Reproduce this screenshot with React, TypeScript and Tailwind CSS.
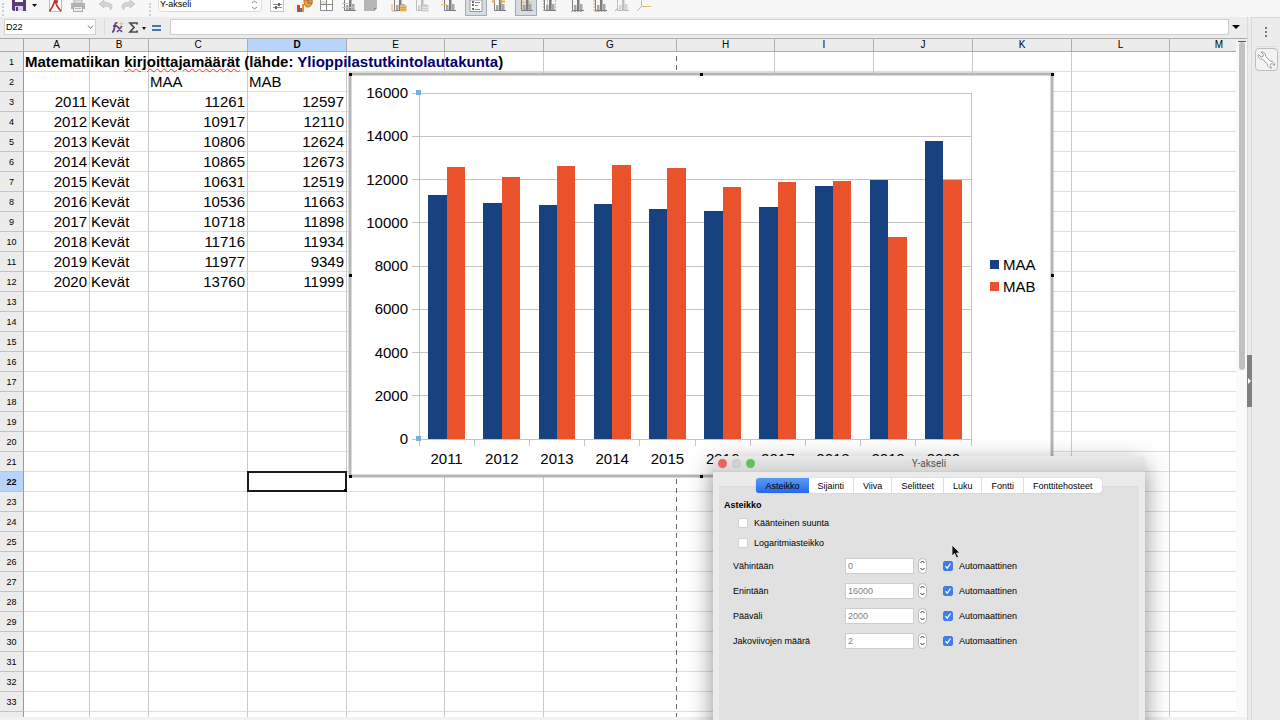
import type { ReactNode } from "react";
import clsx from "clsx";

const COLUMNS = [
  { name: "A", width: 66 },
  { name: "B", width: 59 },
  { name: "C", width: 99 },
  { name: "D", width: 99 },
  { name: "E", width: 98 },
  { name: "F", width: 99 },
  { name: "G", width: 133 },
  { name: "H", width: 98 },
  { name: "I", width: 99 },
  { name: "J", width: 99 },
  { name: "K", width: 99 },
  { name: "L", width: 98 },
  { name: "M", width: 99 },
];

const DATA = [
  { year: 2011, maa: 11261, mab: 12597 },
  { year: 2012, maa: 10917, mab: 12110 },
  { year: 2013, maa: 10806, mab: 12624 },
  { year: 2014, maa: 10865, mab: 12673 },
  { year: 2015, maa: 10631, mab: 12519 },
  { year: 2016, maa: 10536, mab: 11663 },
  { year: 2017, maa: 10718, mab: 11898 },
  { year: 2018, maa: 11716, mab: 11934 },
  { year: 2019, maa: 11977, mab: 9349 },
  { year: 2020, maa: 13760, mab: 11999 },
];

const ROW_COUNT = 33;
const TICKS = [0, 2000, 4000, 6000, 8000, 10000, 12000, 14000, 16000];
const TABS = ["Asteikko", "Sijainti", "Viiva", "Selitteet", "Luku", "Fontti", "Fonttitehosteet"];
const FIELDS = [
  { id: "min", label: "Vähintään", value: "0" },
  { id: "max", label: "Enintään", value: "16000" },
  { id: "major", label: "Pääväli", value: "2000" },
  { id: "minor", label: "Jakoviivojen määrä", value: "2" },
];

/* ---------- toolbar ---------- */

function Tool({
  label,
  active,
  className,
  children,
}: {
  label: string;
  active?: boolean;
  className?: string;
  children: ReactNode;
}) {
  return (
    <button
      type="button"
      aria-label={label}
      className={clsx(
        "flex shrink-0 items-end justify-center",
        active ? "h-4 w-[22px] border border-t-0 border-[#a3a9b1] bg-[#d6dce4] pb-[3px]" : "h-3 w-4",
        className
      )}
    >
      <svg width="16" height="12" viewBox="0 0 16 12" fill="none">
        {children}
      </svg>
    </button>
  );
}

function MiniBars({ muted }: { muted?: boolean }) {
  const c = muted ? "#bdbdbd" : "#7d7d7d";
  return (
    <>
      <path d="M3.500 0v10.500H15" stroke={c} />
      <path d="M5 5h2.500v5H5zM11 4h2.500v6H11z" fill={muted ? "#d2d2d2" : "#a6a6a6"} />
      <path d="M8 0h2.500v10H8z" fill={c} />
    </>
  );
}

function Grip() {
  return <span className="h-3 w-0 shrink-0 border-l-2 border-dotted border-[#cfcfcf]" />;
}

function Toolbar() {
  return (
    <div className="flex h-[17px] shrink-0 items-start overflow-hidden bg-[#f7f7f7]">
      <div className="ml-0.5">
        <Grip />
      </div>
      <Tool label="Tallenna" className="ml-[7px]">
        <path d="M1 0h14v11H2.500L1 9.500z" fill="#5d3a78" />
        <path d="M4 0h8v2H4z" fill="#fff" />
        <path d="M4 6h8v5H4z" fill="#ddd3e6" />
        <path d="M5 7h2v4H5z" fill="#5d3a78" />
      </Tool>
      <Tool label="Tallennusvalinnat" className="ml-px">
        <path d="M4 4h5L6.500 7z" fill="#111" />
      </Tool>
      <Tool label="Vie PDF" className="ml-1">
        <path d="M1.500 0v11.500h12V0" fill="#fff" stroke="#bdbdbd" />
        <path d="M7 0C6 4 4 8 1.500 11.500M7 0c1 5 3 8 6 11M9 0v3" stroke="#c5312f" strokeWidth="1.700" />
      </Tool>
      <Tool label="Tulosta" className="ml-1.5">
        <path d="M1 3h14v6H1z" fill="#b3b3b3" />
        <path d="M4 0h8v3H4z" fill="#e6e6e6" stroke="#b3b3b3" />
        <path d="M3.500 6.500h9v5h-9z" fill="#eee" stroke="#a8a8a8" />
        <path d="M5 8.500h6" stroke="#bbb" />
      </Tool>
      <Tool label="Kumoa" className="ml-3">
        <path d="M1 4l5-4v2.500c5-.5 8 1 8 4.500 0 1.500-1 2.500-2 3 .8-3-1.500-4-6-4V8z" fill="#d4d4d4" stroke="#bbb" strokeWidth=".7" />
      </Tool>
      <Tool label="Tee uudelleen" className="ml-1.5">
        <path d="M15 4l-5-4v2.500c-5-.5-8 1-8 4.500 0 1.500 1 2.500 2 3-.8-3 1.500-4 6-4V8z" fill="#d4d4d4" stroke="#bbb" strokeWidth=".7" />
      </Tool>
      <div className="ml-[13px]">
        <Grip />
      </div>
      <div className="relative ml-[7px] h-3 w-[104px] shrink-0">
        <select
          aria-label="Kaavion osa"
          className="absolute bottom-0 h-4 w-full appearance-none rounded-sm border border-[#dcdcdc] bg-white px-px pb-px text-[9px] leading-3 text-black"
        >
          <option>Y-akseli</option>
        </select>
        <svg className="pointer-events-none absolute right-1 bottom-0.5" width="7" height="10" viewBox="0 0 7 10" fill="none" stroke="#8a8a8a">
          <path d="M1 3l2.500-2L6 3M1 7l2.500 2L6 7" />
        </svg>
      </div>
      <Tool label="Muotoile valinta" className="ml-[7px]">
        <path d="M1.500 0v11.500h13V0" fill="#fff" stroke="#c2c2c2" />
        <path d="M4 4.500h9M4 7.500h9" stroke="#8a8a8a" />
        <path d="M9 3h2v3H9zM6 6h2v3H6z" fill="#666" />
      </Tool>
      <Tool label="Kaavion tyyppi" className="ml-3">
        <path d="M0 5h3v7H0z" fill="#d8432e" />
        <path d="M3 8h2v4H3z" fill="#4a72b0" />
        <path d="M5 4h2v8H5z" fill="#e88f2a" />
        <path d="M7 0h8c1 3-1 7-4 7S7 4 7 0z" fill="#ef9d3b" stroke="#c26d15" />
        <path d="M11 0v3h4" stroke="#5b6e92" />
      </Tool>
      <Tool label="Tietotaulukko" className="ml-1.5">
        <path d="M1.500 0v10.500h12V0M1.500 4.500h12M7.500 0v10.500" fill="#fff" stroke="#8a8a8a" />
        <path d="M2 1h5v3H2z" fill="#f3ddb5" />
      </Tool>
      <Tool label="Tietoalueet" className="ml-1.5">
        <MiniBars />
        <path d="M1 7.500h13M1 3.500h6" stroke="#e8bd74" />
      </Tool>
      <Tool label="Kaavioalue" className="ml-1.5">
        <path d="M1 0h13v8l-3 3H1z" fill="#b5b5b5" />
        <path d="M14 8l-3 3V8z" fill="#8e8e8e" />
      </Tool>
      <Tool label="Otsikot" className="ml-3">
        <MiniBars />
        <path d="M1 4v7h6" stroke="#e9a767" />
        <path d="M9 5h6.500v6.500H9z" fill="#efb95f" />
        <path d="M9 7.500h6M9 9.500h6" stroke="#c78c31" strokeWidth=".6" />
      </Tool>
      <Tool label="Akselit" className="ml-1.5">
        <MiniBars muted />
        <path d="M9 5h6.500v6.500H9z" fill="#cdcdcd" />
        <path d="M9 7.500h6M9 9.500h6" stroke="#eee" strokeWidth=".8" />
      </Tool>
      <Tool label="Seinä" className="ml-3">
        <MiniBars />
        <path d="M0 4.500h6" stroke="#e8bd74" />
      </Tool>
      <Tool label="Selite" active className="ml-2">
        <path d="M2 0h12v11.500H2z" fill="#fff" stroke="#999" />
        <path d="M4 1h2v2H4z" fill="#4675b0" />
        <path d="M4 4h2v2H4z" fill="#d14836" />
        <path d="M4 8h2v2H4z" fill="#3f8f46" />
        <path d="M7 2.500h5M7 5.500h3M7 9.500h5" stroke="#8a8a8a" />
      </Tool>
      <Tool label="Akseliotsikot" className="ml-1">
        <MiniBars />
        <path d="M1 1.500h3M9 1.500h5" stroke="#e8a648" strokeWidth="2" />
      </Tool>
      <Tool label="Vaakaviivat" active className="ml-2">
        <path d="M2 2.500h12M2 5.500h12M2 8.500h12" stroke="#e6c181" />
        <MiniBars />
      </Tool>
      <Tool label="Pystyviivat" className="ml-1">
        <path d="M2.500 0v11M6.500 0v11M10.500 0v11M14.500 0v11" stroke="#e9ba72" strokeDasharray="2 1" />
        <MiniBars />
      </Tool>
      <Tool label="X-akseli" className="ml-3">
        <MiniBars />
        <path d="M2 11.500h12" stroke="#e59d4a" strokeDasharray="2 1" />
      </Tool>
      <Tool label="Y-akseli" className="ml-[7px]">
        <MiniBars />
        <path d="M2 0v11.500h12" stroke="#e8a85b" strokeDasharray="2 1" />
      </Tool>
      <Tool label="Z-akseli" className="ml-1.5">
        <MiniBars muted />
        <path d="M1 11l3-3" stroke="#aaa" />
      </Tool>
      <Tool label="Kaikki akselit" className="ml-1.5">
        <path d="M5.500 0v6.500H15M5.500 6.500L1 11" stroke="#e2b572" />
      </Tool>
    </div>
  );
}

function FormulaBar() {
  return (
    <div className="flex h-[21px] shrink-0 items-start bg-[#ececec] pt-0.5 pr-1.5 pl-1">
      <div className="relative flex h-4 w-[92px] shrink-0">
        <input
          aria-label="Nimikenttä"
          defaultValue="D22"
          className="h-4 w-full border border-[#d2d2d2] bg-white px-px text-[9px] leading-3 text-black"
        />
        <svg className="absolute top-[5px] right-0.5" width="7" height="6" viewBox="0 0 7 6" fill="none" stroke="#777">
          <path d="M1 1.500l2.500 3L6 1.500" />
        </svg>
      </div>
      <span className="ml-2 h-4 border-l border-[#dcdcdc]" />
      <button type="button" aria-label="Ohjattu funktio" className="ml-1.5">
        <svg width="14" height="16" viewBox="0 0 14 16" fill="none">
          <path d="M1 13c2 0 2-2 3-7 .4-2 1-2.500 2.500-2M2 7h4M6 7l5 6M11 7l-5 6" stroke="#68487d" strokeWidth="1.800" />
          <path d="M10 2l1 2 2 .5-2 1L10 7 9.500 5l-2-.8 2-.5z" fill="#f0cf4a" />
        </svg>
      </button>
      <button type="button" aria-label="Valitse funktio" className="ml-[3px] flex">
        <svg width="20" height="16" viewBox="0 0 20 16" fill="none">
          <path d="M9 5.500V4H2l4 4.500L2 13h7v-1.500" stroke="#484848" strokeWidth="1.700" />
          <path d="M14 8h4l-2 3z" fill="#111" />
        </svg>
      </button>
      <button type="button" aria-label="Kaava" className="ml-1">
        <svg width="10" height="16" viewBox="0 0 10 16">
          <path d="M0 6h9v2H0zM0 10h9v2H0z" fill="#4b73ad" />
        </svg>
      </button>
      <input aria-label="Syöterivi" className="ml-2 h-4 min-w-0 flex-1 border border-[#cfcfcf] bg-white" />
      <button type="button" aria-label="Laajenna kaavapalkki" className="ml-0.5">
        <svg width="10" height="16" viewBox="0 0 10 16">
          <path d="M1 6h8l-4 4z" fill="#000" />
        </svg>
      </button>
    </div>
  );
}

/* ---------- sheet ---------- */

function cellContent(row: number, col: string): ReactNode {
  if (row === 1 && col === "A") {
    return (
      <span className="font-bold">
        Matematiikan{" "}
        <span className="underline decoration-red-500 decoration-wavy decoration-1 underline-offset-1">
          kirjoittajamäärät
        </span>{" "}
        (lähde:{" "}
        <a href="#lahde" className="text-[#000070]">
          Ylioppilastutkintolautakunta
        </a>
        )
      </span>
    );
  }
  if (row === 2) {
    if (col === "C") return "MAA";
    if (col === "D") return "MAB";
    return null;
  }
  const record = DATA[row - 3];
  if (!record) return null;
  if (col === "A") return record.year;
  if (col === "B") return "Kevät";
  if (col === "C") return record.maa;
  if (col === "D") return record.mab;
  return null;
}

function Sheet() {
  // one unlabelled row is cut off below the last full one
  const rows = Array.from({ length: ROW_COUNT + 1 }, (_, i) => i + 1);
  return (
    <div className="relative min-w-0 flex-1 overflow-hidden bg-white">
      <div className="h-full overflow-hidden">
        <table className="w-0 table-fixed border-separate border-spacing-0">
          <colgroup>
            <col className="w-6" />
            {COLUMNS.map((c) => (
              <col key={c.name} style={{ width: c.width }} />
            ))}
          </colgroup>
          <thead>
            <tr className="h-3.5">
              <th className="border-y border-r border-[#a9a9a9] bg-[#ececec] p-0" />
              {COLUMNS.map((c) => (
                <th
                  key={c.name}
                  scope="col"
                  className={clsx(
                    "border-y border-r border-[#adadad] p-0 text-[10px] leading-3",
                    c.name === "D" ? "bg-[#b9d4fb] font-bold" : "bg-[#ececec] font-normal"
                  )}
                >
                  {c.name}
                </th>
              ))}
            </tr>
          </thead>
          <tbody>
            {rows.map((r) => (
              <tr key={r} className="h-5">
                <th
                  scope="row"
                  className={clsx(
                    "border-r border-b border-r-[#999] border-b-[#c3c3c3] p-0 text-[9px] leading-3",
                    r === 22 ? "bg-[#b9d4fb] font-bold" : "bg-[#ececec] font-normal"
                  )}
                >
                  {r <= ROW_COUNT && r}
                </th>
                {COLUMNS.map((c) => {
                  const content = cellContent(r, c.name);
                  const selected = r === 22 && c.name === "D";
                  return (
                    <td
                      key={c.name}
                      className={clsx(
                        "border-r border-b border-b-[#dedede] py-0 pr-0.5 pl-px text-[15px] leading-[19px] whitespace-nowrap",
                        c.name === "G" ? "border-r-transparent" : "border-r-[#cbcbcb]",
                        typeof content === "number" && "text-right",
                        selected && "relative"
                      )}
                    >
                      {content}
                      {selected && (
                        <span className="absolute -inset-px border-2 border-[#1a1a1a]">
                          <span className="absolute -right-0.5 -bottom-0.5 size-[3px] bg-black" />
                        </span>
                      )}
                    </td>
                  );
                })}
              </tr>
            ))}
          </tbody>
        </table>
      </div>
      {/* page break */}
      <svg className="absolute top-3.5 left-[676px] h-full w-px">
        <line x1="0.500" y1="4" x2="0.500" y2="100%" stroke="#666" strokeDasharray="5 4" />
      </svg>
      <div className="absolute top-[34px] left-[348px]">
        <Chart />
      </div>
    </div>
  );
}

function Chart() {
  const left = 71;
  const right = 623;
  const top = 21;
  const bottom = 367;
  const slot = (right - left) / DATA.length;
  const bar = slot / 3;
  const y = (v: number) => bottom - (v / 16000) * (bottom - top);
  const handles = [
    [2, 2], [353, 2], [704, 2],
    [2, 203], [704, 203],
    [2, 404], [353, 404], [704, 404],
  ];

  return (
    <svg width="706" height="406" viewBox="0 0 706 406" role="img" aria-label="MAA, MAB" className="block text-[15px]">
      <rect x="2" y="2" width="702" height="402" fill="#fff" stroke="#b5b5b5" strokeWidth="3" />
      <g shapeRendering="crispEdges">
        {TICKS.map((t) => (
          <line key={t} x1={left - 7} x2={right} y1={y(t)} y2={y(t)} stroke="#c4c4c4" />
        ))}
        <path d={`M${left} ${top}V${bottom}M${right} ${top}V${bottom}`} stroke="#c4c4c4" />
        {DATA.map((d, i) => (
          <g key={d.year}>
            <line x1={left + i * slot} x2={left + i * slot} y1={bottom} y2={bottom + 7} stroke="#c4c4c4" />
            <rect x={left + i * slot + bar / 2} y={y(d.maa)} width={bar} height={bottom - y(d.maa)} fill="#18427f" />
            <rect x={left + i * slot + bar * 1.5} y={y(d.mab)} width={bar} height={bottom - y(d.mab)} fill="#ea522c" />
          </g>
        ))}
        <line x1={right} x2={right} y1={bottom} y2={bottom + 7} stroke="#c4c4c4" />
      </g>
      {TICKS.map((t) => (
        <text key={t} x={left - 11} y={y(t) + 5} textAnchor="end">
          {t}
        </text>
      ))}
      {DATA.map((d, i) => (
        <text key={d.year} x={left + (i + 0.5) * slot} y={bottom + 25} textAnchor="middle">
          {d.year}
        </text>
      ))}
      <rect x="642" y="188" width="9" height="9" fill="#18427f" />
      <text x="655" y="198">MAA</text>
      <rect x="642" y="210" width="9" height="9" fill="#ea522c" />
      <text x="655" y="220">MAB</text>
      {handles.map(([hx, hy]) => (
        <rect key={`${hx}-${hy}`} x={hx - 1} y={hy - 1} width="3" height="3" fill="#000" />
      ))}
      <rect x={left - 3} y={top - 3} width="5" height="5" fill="#79b0d8" />
      <rect x={left - 3} y={bottom - 3} width="5" height="5" fill="#79b0d8" />
    </svg>
  );
}

function ScrollTrack() {
  return (
    <div className="w-[11px] shrink-0 border-t border-[#a9a9a9] bg-[#fafafa]">
      <div className="mx-auto h-[3px] w-2 border-b border-[#555] bg-[#ececec]" />
      <div className="mx-auto h-[328px] w-1.5 rounded-full bg-[#c1c1c1]" />
    </div>
  );
}

function Sidebar() {
  return (
    <aside className="flex shrink-0 bg-[#ececec]">
      <div className="flex w-[5px] flex-col border-x border-[#dadada]">
        <button
          type="button"
          aria-label="Piilota sivupalkki"
          className="-mx-px mt-[338px] flex h-[52px] items-center justify-center bg-[#808080]"
        >
          <svg width="5" height="6" viewBox="0 0 5 6">
            <path d="M1 0l3 3-3 3z" fill="#fff" />
          </svg>
        </button>
      </div>
      <div className="flex w-7 flex-col items-center border-t border-[#d8d8d8]">
        <button type="button" aria-label="Sivupalkin asetukset" className="mt-2">
          <svg width="4" height="12" viewBox="0 0 4 12" fill="#777">
            <path d="M1 1h2v2H1zM1 5h2v2H1zM1 9h2v2H1z" />
          </svg>
        </button>
        <span className="mt-2 w-5 border-t border-[#dcdcdc]" />
        <button
          type="button"
          aria-label="Ominaisuudet"
          className="mt-px flex size-[23px] items-center justify-center rounded-sm border border-[#bdbdbd] bg-[#f3f3f3]"
        >
          <svg width="18" height="18" viewBox="0 0 18 18" fill="#fff" stroke="#9a9a9a" strokeLinejoin="round">
            <path d="M4 1l2.500 2.500-.5 2-2 .5L1.500 3.500C.5 6 2.500 8.500 5.500 8l5 5c-.5 2.500 2 4.500 4.500 4l-2-2.300.5-1.700 1.700-.5 2.300 2c.5-2.500-1.500-4.500-4-4.200l-5-5C9 2.500 6.500.5 4 1z" />
          </svg>
        </button>
      </div>
    </aside>
  );
}

/* ---------- dialog ---------- */

function Check({ id, label, checked }: { id: string; label: string; checked?: boolean }) {
  return (
    <div className="flex items-center gap-1.5">
      <span className="relative flex">
        <input
          id={id}
          type="checkbox"
          defaultChecked={checked}
          className="peer size-2.5 appearance-none rounded-[2px] border border-[#d0d0d0] bg-white checked:border-[#3f7de8] checked:bg-[#3f7de8]"
        />
        <svg
          className="pointer-events-none absolute inset-0 hidden peer-checked:block"
          width="10"
          height="10"
          viewBox="0 0 10 10"
          fill="none"
          stroke="#fff"
          strokeWidth="1.300"
        >
          <path d="M2.500 5.200l1.800 2L7.500 2.500" />
        </svg>
      </span>
      <label htmlFor={id}>{label}</label>
    </div>
  );
}

function Stepper({ label }: { label: string }) {
  return (
    <span className="flex h-4 w-[9px] flex-col overflow-hidden rounded-full border border-[#b9b9b9] bg-white">
      <button type="button" aria-label={`${label} +`} className="flex flex-1 items-center justify-center">
        <svg width="5" height="4" viewBox="0 0 5 4" fill="none" stroke="#333">
          <path d="M.5 3l2-2 2 2" />
        </svg>
      </button>
      <button type="button" aria-label={`${label} −`} className="flex flex-1 items-center justify-center">
        <svg width="5" height="4" viewBox="0 0 5 4" fill="none" stroke="#333">
          <path d="M.5 1l2 2 2-2" />
        </svg>
      </button>
    </span>
  );
}

function AxisDialog() {
  return (
    <div
      role="dialog"
      aria-labelledby="dialog-title"
      className="absolute top-[456px] left-[713px] flex h-80 w-[432px] flex-col rounded-t-md bg-[#ebebeb] text-[9px] leading-3 text-black shadow-[0_8px_24px_rgba(0,0,0,0.45)]"
    >
      <div className="relative flex h-4 items-center justify-center rounded-t-md border-b border-[#cfcfcf] bg-linear-to-b from-[#e9e9e9] to-[#d6d6d6]">
        <div className="absolute left-[5px] flex gap-[5px]">
          <button type="button" aria-label="Sulje" className="size-[9px] rounded-full bg-[#ee6259]" />
          <button type="button" aria-label="Pienennä" className="size-[9px] rounded-full border border-[#c4c4c4] bg-[#d2d2d2]" />
          <button type="button" aria-label="Suurenna" className="size-[9px] rounded-full bg-[#5fc454]" />
        </div>
        <h2 id="dialog-title" className="font-[Roboto,sans-serif] text-[10px] text-[#555]">
          Y-akseli
        </h2>
      </div>

      <div role="tablist" className="relative z-10 mx-auto mt-1.5 flex h-[15px] rounded-[3px] bg-white shadow-[0_0_1px_rgba(0,0,0,0.35)]">
        {TABS.map((t, i) => (
          <button
            key={t}
            type="button"
            role="tab"
            aria-selected={i === 0}
            className={clsx(
              "px-[9px]",
              i === 0 ? "rounded-l-[3px] bg-linear-to-b from-[#5b9bf8] to-[#2468e8]" : "border-r border-[#dedede] last:border-r-0"
            )}
          >
            {t}
          </button>
        ))}
      </div>

      <div className="mx-1.5 -mt-[7px] flex-1 border-t border-[#dcdcdc] bg-[#e1e1e1] px-[5px] pt-3">
        <h3 className="h-3.5 font-bold">Asteikko</h3>
        <div className="grid auto-rows-[20px] items-center pl-3.5">
          <Check id="reverse" label="Käänteinen suunta" />
          <Check id="log" label="Logaritmiasteikko" />
        </div>
        <div className="pl-[9px]">
          {FIELDS.map((f) => (
            <div key={f.id} className="flex h-[25px] items-center">
              <label htmlFor={f.id} className="w-28">
                {f.label}
              </label>
              <input
                id={f.id}
                type="text"
                inputMode="numeric"
                defaultValue={f.value}
                className="mr-1 h-4 w-[69px] border border-[#cdcdcd] bg-white px-0.5 text-[#808080]"
              />
              <Stepper label={f.label} />
              <div className="ml-4">
                <Check id={`${f.id}-auto`} label="Automaattinen" checked />
              </div>
            </div>
          ))}
        </div>
      </div>
    </div>
  );
}

export default function App() {
  return (
    <div className="relative flex h-screen flex-col overflow-hidden bg-[#f2f2f2] font-['Liberation_Sans',Arial,sans-serif] text-black">
      <Toolbar />
      <div className="flex min-h-0 flex-1">
        <div className="flex min-w-0 flex-1 flex-col">
          <FormulaBar />
          <div className="flex min-h-0 flex-1 pb-[3px]">
            <Sheet />
            <ScrollTrack />
          </div>
        </div>
        <Sidebar />
      </div>
      <AxisDialog />
      {/* pointer */}
      <svg className="pointer-events-none absolute top-[544px] left-[951px]" width="11" height="15" viewBox="0 0 11 15">
        <path d="M1 1v11l2.600-2.400L5.500 14l2-.9-1.900-4.100H9z" fill="#111" stroke="#eee" strokeWidth=".8" />
      </svg>
    </div>
  );
}
